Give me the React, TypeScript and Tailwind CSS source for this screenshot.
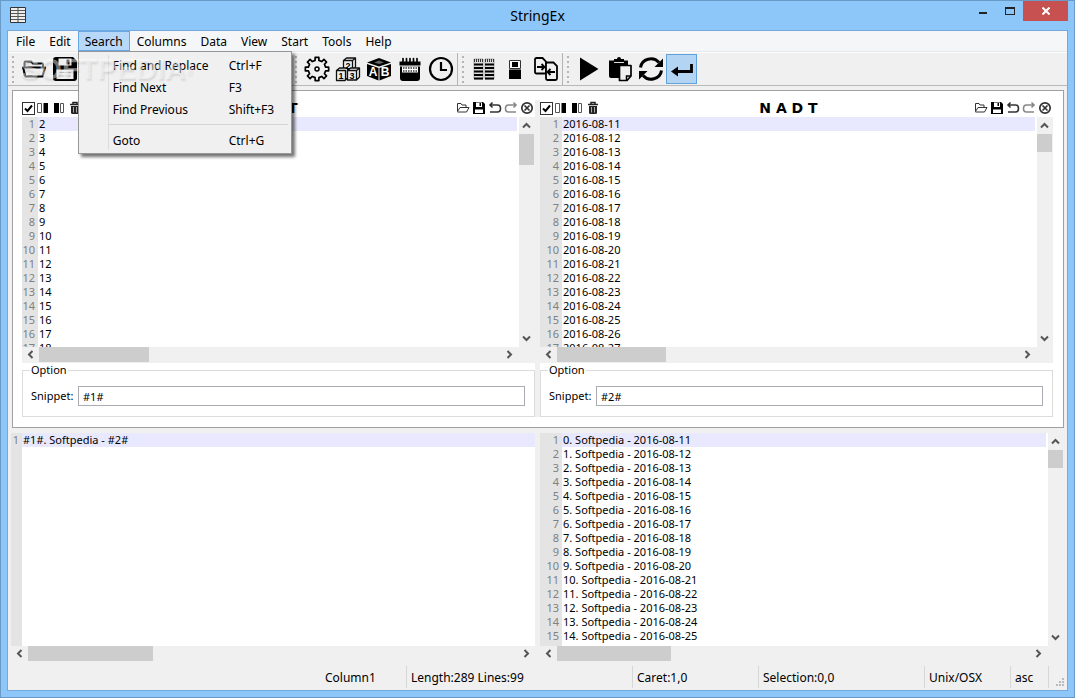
import type { ReactNode } from 'react'
import { clsx } from 'clsx'

const menus = ['File', 'Edit', 'Search', 'Columns', 'Data', 'View', 'Start', 'Tools', 'Help']

const firstColumn = Array.from({ length: 17 }, (_, i) => String(i + 2))
const dates = Array.from({ length: 17 }, (_, i) => `2016-08-${i + 11}`)
const output = Array.from({ length: 15 }, (_, i) => `${i}. Softpedia - 2016-08-${i + 11}`)

/* ---------- icons ---------- */

function Icon({ size = 16, children }: { size?: number; children: ReactNode }) {
  return (
    <svg width={size} height={size} viewBox={`0 0 ${size} ${size}`} fill="none" stroke="#000" aria-hidden="true">
      {children}
    </svg>
  )
}

function gearPoints(teeth: number, cx: number, outer: number, inner: number) {
  const pts: string[] = []
  for (let i = 0; i < teeth; i++) {
    const mid = (i / teeth) * Math.PI * 2
    const step = (Math.PI * 2) / teeth
    const corners = [[-0.28, inner], [-0.2, outer], [0.2, outer], [0.28, inner]]
    corners.forEach(([k, r]) => {
      const a = mid + k * step
      pts.push(`${(cx + r * Math.sin(a)).toFixed(2)},${(cx - r * Math.cos(a)).toFixed(2)}`)
    })
  }
  return pts.join(' ')
}

const OpenIcon = () => (
  <Icon size={26}>
    <path d="M3.500 19.500V6.500q0-1 1-1h5.500l2 2h9q1 0 1 1v2.500" strokeWidth="2" />
    <path d="M2 11.500h22l-2.500 9h-17z" strokeWidth="2" strokeLinejoin="round" fill="#f0f0f0" />
  </Icon>
)

const SaveIcon = () => (
  <Icon size={26}>
    <path d="M1 4q0-3 3-3h17l4 4v17q0 3-3 3H4q-3 0-3-3z" fill="#000" stroke="none" />
    <path d="M6.500 2.500h13v7h-13zM4.500 13.500h17v9.500h-17z" fill="#f0f0f0" stroke="none" />
    <path d="M14.500 3.500h3v5h-3z" fill="#000" stroke="none" />
    <path d="M7 16.500h12M7 20h12" strokeWidth="1" stroke="#bbb" />
  </Icon>
)

const GearIcon = () => (
  <Icon size={26}>
    <polygon points={gearPoints(8, 13, 11.8, 8.8)} strokeWidth="1.700" strokeLinejoin="round" />
    <circle cx="13" cy="13" r="2" strokeWidth="1.500" />
  </Icon>
)

const NumbersIcon = () => (
  <Icon size={26}>
    <g strokeWidth="1.300" stroke="#111" fill="#f0f0f0" strokeLinejoin="round">
      <path d="M8.500 4.500l3-2.500h9v9l-3 2.500h-9zM8.500 4.500h9v9M17.500 4.500l3-2.500" />
      <path d="M1.500 14.500l3-2.500h8v10l-2.500 2.500H1.500zM1.500 14.500h9v9.500" />
      <path d="M12.500 14.500l3-2.500h9v9l-3 3h-9zM12.500 14.500h9v9.500M21.500 14.500l3-2.500" />
    </g>
    <g fill="#000" stroke="none" fontFamily="Liberation Sans" fontSize="9" fontWeight="bold" textAnchor="middle">
      <text x="13" y="12.500">2</text>
      <text x="6" y="23">1</text>
      <text x="17" y="23">3</text>
    </g>
  </Icon>
)

const LettersIcon = () => (
  <Icon size={26}>
    <path d="M1 6.500L13 2l12 4.500-12 4zM1 8l11.500 4v12.500L1 20zM25 8l-11.500 4v12.500L25 20z" fill="#000" stroke="none" />
    <path d="M8 6.500l5-2 5 2-5 1.500z" fill="#666" stroke="none" />
    <g fill="#fff" stroke="none" fontFamily="Liberation Sans" fontSize="12" fontWeight="bold" textAnchor="middle">
      <text x="7" y="20">A</text>
      <text x="19" y="20">B</text>
    </g>
  </Icon>
)

const CalendarIcon = () => (
  <Icon size={26}>
    <path d="M2.500 5.500h21v4h-21zM3 10.500h20V22q0 3-3 3H6q-3 0-3-3z" fill="#000" stroke="none" />
    <path d="M6 2.500v4M9.500 2.500v4M13 2.500v4M16.500 2.500v4M20 2.500v4" strokeWidth="1.700" strokeLinecap="round" />
    <path d="M5 10.500h16v6H5z" fill="#fff" stroke="none" />
    <path d="M6 12h14M6 15h14" strokeWidth="1.500" stroke="#333" strokeDasharray="1.500 1" />
  </Icon>
)

const ClockIcon = () => (
  <Icon size={26}>
    <circle cx="13" cy="13" r="11" strokeWidth="2.200" />
    <path d="M13 6v8h6" strokeWidth="2.200" />
  </Icon>
)

const TableIcon = () => (
  <Icon size={26}>
    {[3, 14].map((x) => (
      <g key={x}>
        <path d={`M${x} 3h9v20h-9z`} fill="#ddd" stroke="#aaa" strokeWidth="1" />
        <path d={`M${x} 4.500h9`} stroke="#333" strokeWidth="3" strokeDasharray="1 1" />
        <path d={`M${x} 8.500h9M${x} 12h9M${x} 15.500h9M${x} 19h9M${x} 22.500h9`} stroke="#000" strokeWidth="2" />
      </g>
    ))}
  </Icon>
)

const BlockIcon = () => (
  <Icon size={26}>
    <path d="M7.500 4.500h11v8h-11z" fill="#fff" stroke="#333" strokeWidth="1" />
    <path d="M10 6h6v5h-6zM7 13.500h12V23H7z" fill="#000" stroke="none" />
  </Icon>
)

const MergeIcon = () => (
  <Icon size={26}>
    <path d="M3.500 2h6l3.500 3.500V16q0 1.500-1.500 1.500h-8Q2 17.500 2 16V3.500Q2 2 3.500 2z" strokeWidth="1.800" />
    <path d="M14.500 6.500h6L24 10v12.500q0 1.500-1.500 1.500h-8q-1.500 0-1.500-1.500V8q0-1.500 1.500-1.500z" strokeWidth="1.800" fill="#f0f0f0" />
    <path d="M4 11h7M8.500 8l3 3-3 3M22 16h-7M17.500 13l-3 3 3 3" strokeWidth="1.800" />
  </Icon>
)

const RunIcon = () => (
  <Icon size={26}>
    <path d="M4 1.500v23L22.500 13z" fill="#000" stroke="none" />
  </Icon>
)

const PasteIcon = () => (
  <Icon size={26}>
    <path d="M2 4.500h5V3h3q0-2 2-2t2 2h3v1.500h4v6h-7V22H4q-2 0-2-2z" fill="#000" stroke="none" />
    <path d="M7 6.500h10" stroke="#ddd" strokeWidth="1" />
    <path d="M12.500 9.500H24V20l-4 4.500h-7.500z" fill="#f0f0f0" strokeWidth="1.700" strokeLinejoin="round" />
    <path d="M19.500 24v-4H24" strokeWidth="1.500" />
  </Icon>
)

const RefreshIcon = () => (
  <Icon size={26}>
    <path d="M2.500 11.500A10.500 10 0 0 1 21 6.500M23.500 14.500A10.500 10 0 0 1 5 19.500" strokeWidth="3" />
    <path d="M25 2.500v8.500h-8.500zM1 23.500V15h8.500z" fill="#000" stroke="none" />
  </Icon>
)

const EnterIcon = () => (
  <Icon size={26}>
    <path d="M22.500 8v7.500H6" strokeWidth="2.800" />
    <path d="M2 15.500l7-5v10z" fill="#000" stroke="none" />
  </Icon>
)

const SmallLeftIcon = () => (
  <Icon>
    <path d="M.5 3.500h4v9h-4z" stroke="#555" />
    <path d="M6.500 3H11v10H6.500z" fill="#000" stroke="none" />
  </Icon>
)

const SmallRightIcon = () => (
  <Icon>
    <path d="M1 3h5v10H1z" fill="#000" stroke="none" />
    <path d="M7.500 3.500h3v9h-3z" stroke="#555" />
  </Icon>
)

const TrashIcon = () => (
  <Icon>
    <path d="M1 4.500h10M4 4V2.500h4V4" stroke="#222" strokeWidth="1.500" />
    <path d="M2 6h8v6.500q0 1.500-1.500 1.500h-5Q2 14 2 12.500z" fill="#222" stroke="none" />
    <path d="M4.500 7v5.500M7.500 7v5.500" stroke="#aaa" />
  </Icon>
)

const SmallOpenIcon = () => (
  <Icon>
    <path d="M1.500 11.500v-8H5l1 1.500h4v2M1.500 11.500l2.500-4h9l-2.500 4.500H1.500" stroke="#333" />
  </Icon>
)

const SmallSaveIcon = () => (
  <Icon>
    <path d="M1 2h10l2 2v10H1z" fill="#000" stroke="none" />
    <path d="M4 2.500h6V7H4zM3 9.500h8V13H3z" fill="#fff" stroke="none" />
    <path d="M7.500 3h1.500v3H7.500z" fill="#000" stroke="none" />
  </Icon>
)

const UndoIcon = () => (
  <Icon>
    <path d="M2 5h7.500q3 0 3 3.500t-3 3.500H2M4.500 2.500L2 5l2.500 2.500" stroke="#333" strokeWidth="1.600" />
  </Icon>
)

const RedoIcon = () => (
  <Icon>
    <path d="M12 5H4.500q-3 0-3 3.500t3 3.500H12M9.500 2.500L12 5 9.500 7.500" stroke="#888" strokeWidth="1.600" />
  </Icon>
)

const CloseIcon = () => (
  <Icon>
    <circle cx="7" cy="8" r="5.200" stroke="#333" strokeWidth="1.700" />
    <path d="M4.500 5.500l5 5M9.500 5.500l-5 5" stroke="#333" strokeWidth="1.700" />
  </Icon>
)

/* ---------- scroll bars ---------- */

const chevrons = {
  up: 'M1 6.500L4.500 3 8 6.500',
  down: 'M1 2.500L4.500 6 8 2.500',
  left: 'M6.500 1L3 4.500 6.500 8',
  right: 'M2.500 1L6 4.500 2.500 8',
}

function ScrollButton({ dir }: { dir: keyof typeof chevrons }) {
  return (
    <button
      aria-label={`Scroll ${dir}`}
      className={clsx('flex shrink-0 items-center justify-center', dir === 'up' || dir === 'down' ? 'h-[17px] w-[15px]' : 'h-[15px] w-[17px]')}
    >
      <svg width="9" height="9" viewBox="0 0 9 9" fill="none" stroke="#555" strokeWidth="2">
        <path d={chevrons[dir]} />
      </svg>
    </button>
  )
}

function VScroll({ thumb }: { thumb: string }) {
  return (
    <div className="flex w-4 shrink-0 flex-col bg-[#f0f0f0]">
      <ScrollButton dir="up" />
      <div className={clsx('w-[15px] bg-[#cdcdcd]', thumb)} />
      <div className="flex-1" />
      <ScrollButton dir="down" />
    </div>
  )
}

function HScroll({ thumb, corner }: { thumb: string; corner?: boolean }) {
  return (
    <div className={clsx('flex h-4 bg-[#f0f0f0]', corner && 'pr-[17px]')}>
      <ScrollButton dir="left" />
      <div className={clsx('h-[15px] bg-[#cdcdcd]', thumb)} />
      <div className="flex-1" />
      <ScrollButton dir="right" />
    </div>
  )
}

/* ---------- editor ---------- */

function Editor({ lines, gutter }: { lines: string[]; gutter: string }) {
  return (
    <div className="flex min-w-0 flex-1 overflow-hidden bg-white text-[11px] leading-[14px]">
      <div className={clsx('shrink-0 bg-[#e4e4e4] pr-[3px] text-right text-[#808080]', gutter)}>
        {lines.map((_, i) => (
          <div key={i}>{i + 1}</div>
        ))}
      </div>
      <div className="min-w-0 flex-1 whitespace-pre text-black">
        {lines.map((line, i) => (
          <div key={i} className={clsx('pl-px', i === 0 && 'bg-[#e8e8ff]')}>{line}</div>
        ))}
      </div>
    </div>
  )
}

function HeaderButton({ label, children }: { label: string; children: ReactNode }) {
  return (
    <button aria-label={label} className="h-4 w-4">
      {children}
    </button>
  )
}

interface ColumnPaneProps {
  id: string
  title: string
  lines: string[]
  gutter: string
  snippet: string
  vThumb: string
  hThumb: string
}

function ColumnPane({ id, title, lines, gutter, snippet, vThumb, hThumb }: ColumnPaneProps) {
  return (
    <section className="min-w-0 flex-1 bg-white">
      <div className="flex h-[17px] items-start">
        <label className="flex h-4 w-[15px] items-center">
          <input
            type="checkbox"
            defaultChecked
            aria-label={`Enable ${title}`}
            className="peer h-[13px] w-[13px] appearance-none border border-[#333] bg-white"
          />
          <svg width="13" height="13" viewBox="0 0 13 13" fill="none" stroke="#000" strokeWidth="2" className="-ml-[13px] shrink-0 opacity-0 peer-checked:opacity-100">
            <path d="M3 6.500l2.500 2.500L10 3.500" />
          </svg>
        </label>
        <HeaderButton label="Move left"><SmallLeftIcon /></HeaderButton>
        <HeaderButton label="Move right"><SmallRightIcon /></HeaderButton>
        <HeaderButton label="Delete"><TrashIcon /></HeaderButton>
        <h2 className="flex-1 text-center font-['DejaVu_Sans'] text-sm leading-4 font-bold whitespace-pre">{title}</h2>
        <div className="-mr-px flex">
          <HeaderButton label="Open"><SmallOpenIcon /></HeaderButton>
          <HeaderButton label="Save"><SmallSaveIcon /></HeaderButton>
          <HeaderButton label="Undo"><UndoIcon /></HeaderButton>
          <HeaderButton label="Redo"><RedoIcon /></HeaderButton>
          <HeaderButton label="Close"><CloseIcon /></HeaderButton>
        </div>
      </div>
      <div className="flex h-[230px] gap-0.5">
        <Editor lines={lines} gutter={gutter} />
        <VScroll thumb={vThumb} />
      </div>
      <HScroll thumb={hThumb} corner />
      <fieldset className="mt-px border border-[#dcdcdc] px-2 pb-[10px] text-[11px]">
        <legend className="-ml-px px-px leading-3">Option</legend>
        <div className="flex items-center pt-[10px]">
          <label htmlFor={id} className="w-[47px]">Snippet:</label>
          <input id={id} defaultValue={snippet} className="h-[20px] min-w-0 flex-1 border border-[#abadb3] px-1" />
          <span className="w-px" />
        </div>
      </fieldset>
    </section>
  )
}

/* ---------- menu and tool bar ---------- */

function MenuRow({ label, keys }: { label: string; keys: string }) {
  return (
    <button role="menuitem" className="flex h-[22px] w-full items-center pl-[34px] text-left">
      <span className="w-[116px]">{label}</span>
      <span>{keys}</span>
    </button>
  )
}

function SearchMenu() {
  return (
    <div role="menu" className="absolute top-full left-0 z-20 w-[214px] border border-[#979797] bg-[#f0f0f0] pt-[3px] pb-px shadow-[3px_3px_3px_rgba(0,0,0,0.55)]">
      <div className="absolute top-[3px] bottom-[3px] left-[29px] w-px bg-[#dcdcdc]" />
      <MenuRow label="Find and Replace" keys="Ctrl+F" />
      <MenuRow label="Find Next" keys="F3" />
      <MenuRow label="Find Previous" keys="Shift+F3" />
      <hr className="mt-[3px] mr-[3px] mb-[5px] ml-[30px] border-[#d5d5d5]" />
      <MenuRow label="Goto" keys="Ctrl+G" />
    </div>
  )
}

function ToolGroup({ last, wide, children }: { last?: boolean; wide?: boolean; children: ReactNode }) {
  return (
    <div className={clsx('flex items-center', !last && 'border-r border-[#b4b4b4]', wide ? 'w-[283px]' : 'pr-px')}>
      <div className="w-[10px] pl-1">
        <div className="h-[27px] w-0.5 bg-[repeating-linear-gradient(to_bottom,#b5b5b5_0_2px,transparent_2px_5px)]" />
      </div>
      {children}
    </div>
  )
}

function Tool({ label, active, children }: { label: string; active?: boolean; children: ReactNode }) {
  return (
    <button
      aria-label={label}
      className={clsx('flex h-[30px] w-[31px] items-center justify-center', active && 'border border-[#5fa3de] bg-[#b3d4f3]')}
    >
      {children}
    </button>
  )
}

function StatusCell({ width, children, plain }: { width: string; children?: ReactNode; plain?: boolean }) {
  return <div className={clsx('flex h-[22px] items-center pt-0.5', width, plain ? 'pl-[5px]' : 'border-l border-[#d7d7d7] pl-1')}>{children}</div>
}

export default function App() {
  return (
    <div className="flex min-h-screen flex-col border border-[#6a9bc7] bg-[#8dc7fa] px-[6px] pb-[6px] font-['Noto_Sans',sans-serif] text-xs text-black">
      <header className="relative flex h-[29px] items-start justify-between">
        <svg width="16" height="16" viewBox="0 0 16 16" className="mt-1.5 ml-[3px]" aria-hidden="true">
          <path d="M.5.5h15v15H.5z" fill="#eee" stroke="#333" />
          <path d="M1 3.500h14M1 6.500h14M1 9.500h14M1 12.500h14M8 1v14" stroke="#555" />
        </svg>
        <h1 className="absolute inset-x-0 top-[5px] text-center text-[14px] leading-5">StringEx</h1>
        <div className="relative flex">
          <button aria-label="Minimize" className="flex h-5 w-[27px] items-center justify-center">
            <span className="mt-1 h-0.5 w-2 bg-[#222]" />
          </button>
          <button aria-label="Maximize" className="flex h-5 w-[27px] items-center justify-center">
            <span className="h-2 w-[10px] border border-t-2 border-[#222]" />
          </button>
          <button aria-label="Close" className="flex h-5 w-[45px] items-center justify-center bg-[#c75050]">
            <svg width="8" height="8" viewBox="0 0 8 8" stroke="#fff" strokeWidth="2">
              <path d="M.5.5l7 7M7.500.5l-7 7" />
            </svg>
          </button>
        </div>
      </header>

      <div className="flex flex-1 flex-col border border-[#74a9da] bg-[#f0f0f0]">
        <nav className="relative flex h-[21px] border-b border-[#e6e7e8] bg-[#f5f6f7] pl-px">
          {menus.map((name) => (
            <div key={name} className="relative">
              <button
                className={clsx('h-5', name === 'Search' ? 'border border-[#66a7e8] bg-[#b8d8f9] px-[6px] leading-5' : 'px-[7px] leading-[22px]')}
              >
                {name}
              </button>
              {name === 'Search' && <SearchMenu />}
            </div>
          ))}
          <div aria-hidden="true" className="pointer-events-none absolute top-5 left-3 z-30 font-['Liberation_Sans'] text-[29px] leading-9 font-bold text-white/45 [text-shadow:1px_2px_2px_rgba(0,0,0,0.1)]">
            SOFTPEDIA<sup className="text-[9px] leading-none">®</sup>
          </div>
        </nav>

        <div className="flex h-[34px] border-t border-b border-t-white border-b-[#b9b9b9]">
          <ToolGroup wide>
            <Tool label="Open"><OpenIcon /></Tool>
            <Tool label="Save"><SaveIcon /></Tool>
          </ToolGroup>
          <ToolGroup>
            <Tool label="Settings"><GearIcon /></Tool>
            <Tool label="Numbers"><NumbersIcon /></Tool>
            <Tool label="Letters"><LettersIcon /></Tool>
            <Tool label="Dates"><CalendarIcon /></Tool>
            <Tool label="Times"><ClockIcon /></Tool>
          </ToolGroup>
          <ToolGroup>
            <Tool label="Columns"><TableIcon /></Tool>
            <Tool label="Block"><BlockIcon /></Tool>
            <Tool label="Merge"><MergeIcon /></Tool>
          </ToolGroup>
          <ToolGroup last>
            <Tool label="Run"><RunIcon /></Tool>
            <Tool label="Paste"><PasteIcon /></Tool>
            <Tool label="Refresh"><RefreshIcon /></Tool>
            <Tool label="Line break" active><EnterIcon /></Tool>
          </ToolGroup>
        </div>

        <main className="flex flex-1 flex-col pt-1 pr-[3px] pl-[3px]">
          <div className="ml-px flex border border-[#a0a0a0] bg-white pt-[9px] pr-[10px] pb-[10px] pl-[9px]">
            <ColumnPane id="snippet-1" title="T E X T" lines={firstColumn} gutter="w-4" snippet="#1#" vThumb="h-[31px]" hThumb="w-[110px]" />
            <div className="w-[5px] bg-[#f0f0f0]" />
            <ColumnPane id="snippet-2" title="N A D T" lines={dates} gutter="w-[22px]" snippet="#2#" vThumb="h-[18px]" hThumb="w-[109px]" />
          </div>
          <div className="mt-[5px] flex flex-1 gap-[5px]">
            <div className="flex min-w-0 flex-1 flex-col">
              <div className="flex flex-1">
                <Editor lines={['#1#. Softpedia - #2#']} gutter="w-[11px]" />
              </div>
              <HScroll thumb="w-[125px]" />
            </div>
            <div className="flex min-w-0 flex-1 flex-col">
              <div className="flex flex-1 gap-0.5 bg-white">
                <Editor lines={output} gutter="w-[22px]" />
                <VScroll thumb="h-[18px]" />
              </div>
              <HScroll thumb="w-[114px]" corner />
            </div>
          </div>
        </main>

        <footer className="flex h-7 items-center justify-end pt-0.5">
          <StatusCell width="w-[86px]" plain>Column1</StatusCell>
          <StatusCell width="w-[226px]">Length:289 Lines:99</StatusCell>
          <StatusCell width="w-[126px]">Caret:1,0</StatusCell>
          <StatusCell width="w-[166px]">Selection:0,0</StatusCell>
          <StatusCell width="w-[86px]">Unix/OSX</StatusCell>
          <StatusCell width="w-[38px]">asc</StatusCell>
          <StatusCell width="w-[19px]">
            <svg width="8" height="8" viewBox="0 0 8 8" fill="#bbb" className="mt-2 ml-[3px]" aria-hidden="true">
              <path d="M6 0h2v2H6zM3 3h2v2H3zM6 3h2v2H6zM0 6h2v2H0zM3 6h2v2H3zM6 6h2v2H6z" />
            </svg>
          </StatusCell>
        </footer>
      </div>
    </div>
  )
}
